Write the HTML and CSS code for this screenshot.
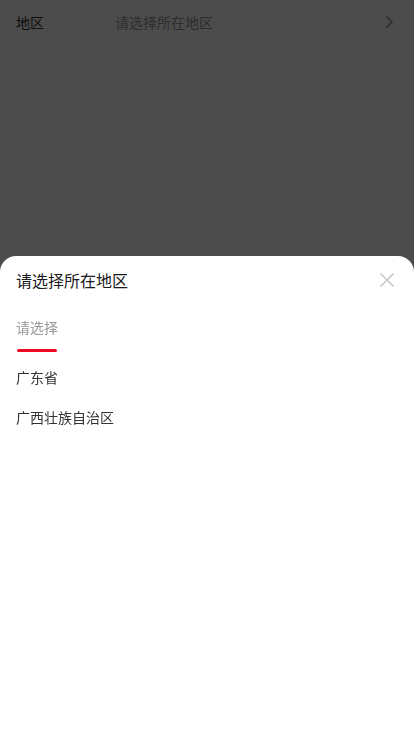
FILE: index.html
```html
<!DOCTYPE html>
<html lang="zh-CN">
<head>
<meta charset="utf-8">
<meta name="viewport" content="width=device-width, initial-scale=1">
<link rel="stylesheet" href="styles.css">
<title>地区</title>
</head>
<body>
<div class="cell">
  <div class="cell-label">地区</div>
  <div class="cell-value">请选择所在地区</div>
  <svg class="cell-arrow" width="16" height="16" viewBox="0 0 16 16"><path d="M5.5 2.5 L11 8 L5.5 13.5" fill="none" stroke="#969799" stroke-width="1.5"/></svg>
</div>

<div class="overlay"></div>

<div class="popup">
  <div class="header">
    <h2 class="title">请选择所在地区</h2>
    <svg class="close" width="16" height="16" viewBox="0 0 16 16"><path d="M1.5 1.5 L14.5 14.5 M14.5 1.5 L1.5 14.5" fill="none" stroke="#c8c9cc" stroke-width="1.6"/></svg>
  </div>
  <div class="tabs">
    <div class="tab">请选择<span class="tab-line"></span></div>
  </div>
  <ul class="options">
    <li class="option">广东省</li>
    <li class="option">广西壮族自治区</li>
  </ul>
</div>
</body>
</html>
```
FILE: styles.css
```css
* { box-sizing: border-box; }
html, body {
  margin: 0;
  padding: 0;
  background: #fff;
  font-family: "Noto Sans CJK SC", "Noto Sans", sans-serif;
  color: #323233;
}
.cell {
  display: flex;
  align-items: center;
  height: 44px;
  padding: 0 16px;
  font-size: 14px;
  line-height: 24px;
}
.cell-label {
  width: 87px;
  margin-right: 12px;
  color: #323233;
}
.cell-value {
  flex: 1;
  color: #969799;
}
.cell-arrow { display: block; margin-right: 1px; }
.overlay {
  position: fixed;
  inset: 0;
  background: rgba(0, 0, 0, 0.7);
}
.popup {
  position: fixed;
  left: 0;
  right: 0;
  bottom: 0;
  height: 480px;
  background: #fff;
  border-radius: 16px 16px 0 0;
  display: flex;
  flex-direction: column;
}
.header {
  display: flex;
  align-items: center;
  justify-content: space-between;
  height: 47px;
  padding: 0 19px 0 16px;
}
.title {
  margin: 0;
  font-size: 16px;
  font-weight: 400;
  line-height: 20px;
  color: #1a1a1a;
}
.close { display: block; margin-top: 1px; }
.tabs {
  display: flex;
  height: 49px;
  padding: 0 16px;
}
.tab {
  position: relative;
  display: flex;
  align-items: center;
  font-size: 14px;
  color: #969799;
  padding-bottom: 1px;
}
.tab-line {
  position: absolute;
  left: 1px;
  bottom: 0;
  width: 40px;
  height: 3px;
  border-radius: 3px;
  background: #ee0a24;
}
.options {
  list-style: none;
  margin: 0;
  padding: 5px 0 0;
}
.option {
  padding: 10px 16px;
  font-size: 14px;
  line-height: 20px;
  color: #323233;
}
```
